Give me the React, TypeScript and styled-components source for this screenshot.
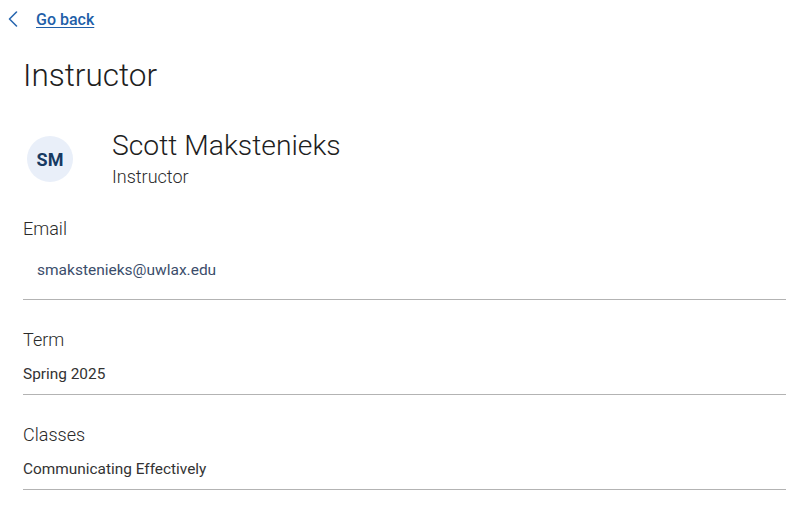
import React from "react";
import styled, { createGlobalStyle } from "styled-components";

const Global = createGlobalStyle`
  html, body { margin: 0; padding: 0; background: #ffffff; }
  body { font-family: Roboto, "Noto Sans", sans-serif; color: #222; }
`;

const Page = styled.div`
  padding: 0 18px 0 23px;
  width: 804px;
  box-sizing: border-box;
`;

const BackBar = styled.div`
  display: flex;
  align-items: center;
  height: 38px;
  margin-left: -16px;
  gap: 17px;
`;

const BackLink = styled.a`
  font-size: 16px;
  font-weight: 500;
  color: #1f5fa8;
  text-decoration: underline;
  text-underline-offset: 2px;
  cursor: pointer;
`;

const Title = styled.h1`
  margin: 18px 0 0;
  font-size: 31.5px;
  font-weight: 300;
  line-height: 40px;
  color: #1e1e1e;
`;

const Profile = styled.div`
  display: flex;
  align-items: center;
  gap: 39px;
  margin-top: 34px;
  padding-left: 4px;
`;

const Avatar = styled.div`
  width: 46px;
  height: 46px;
  border-radius: 50%;
  background: #e9eff9;
  color: #173a63;
  font-weight: 700;
  font-size: 18px;
  display: flex;
  align-items: center;
  justify-content: center;
`;

const NameBlock = styled.div`
  display: flex;
  flex-direction: column;
`;

const Name = styled.div`
  font-size: 28.3px;
  font-weight: 300;
  line-height: 32px;
  color: #1e1e1e;
`;

const Role = styled.div`
  font-size: 18px;
  font-weight: 300;
  line-height: 22px;
  color: #2a2a2a;
  margin-top: 4px;
`;

const Field = styled.div`
  border-bottom: 1px solid #b3b3b3;
`;

const Label = styled.div`
  font-size: 18px;
  font-weight: 300;
  line-height: 22px;
  color: #2a2a2a;
`;

const Value = styled.div<{ $link?: boolean }>`
  font-size: ${(p) => (p.$link ? "15.5px" : "15.4px")};
  line-height: 20px;
  color: ${(p) => (p.$link ? "#3b4d6b" : "#333")};
  padding-left: ${(p) => (p.$link ? "14px" : "0")};
`;

const EmailField = styled(Field)`
  margin-top: 30px;
  padding-bottom: 19px;
  ${Value} { margin-top: 20px; }
`;

const PlainField = styled(Field)`
  margin-top: 29px;
  padding-bottom: 10px;
  ${Value} { margin-top: 13px; }
`;

export default function App() {
  return (
    <>
      <Global />
      <Page>
        <BackBar>
          <svg width="12" height="18" viewBox="0 0 12 18" fill="none">
            <path d="M9.5 2 L2.5 9 L9.5 16" stroke="#2a68b0" strokeWidth="1.6" strokeLinecap="round" strokeLinejoin="round" />
          </svg>
          <BackLink>Go back</BackLink>
        </BackBar>
        <Title>Instructor</Title>
        <Profile>
          <Avatar>SM</Avatar>
          <NameBlock>
            <Name>Scott Makstenieks</Name>
            <Role>Instructor</Role>
          </NameBlock>
        </Profile>
        <EmailField>
          <Label>Email</Label>
          <Value $link>smakstenieks@uwlax.edu</Value>
        </EmailField>
        <PlainField>
          <Label>Term</Label>
          <Value>Spring 2025</Value>
        </PlainField>
        <PlainField>
          <Label>Classes</Label>
          <Value>Communicating Effectively</Value>
        </PlainField>
      </Page>
    </>
  );
}
